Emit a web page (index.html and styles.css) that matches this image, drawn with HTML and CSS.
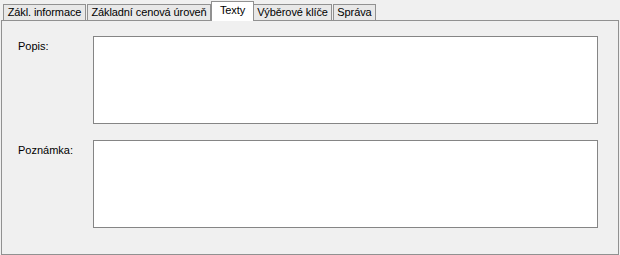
FILE: index.html
```html
<!DOCTYPE html>
<html>

<head>
    <title>Texty</title>
    <link rel="stylesheet" href="styles.css">
</head>

<body>
    <div class="tabs">
        <div class="tab tab-info">Zákl. informace</div>
        <div class="tab tab-price">Základní cenová úroveň</div>
        <div class="tab tab-texts active">Texty</div>
        <div class="tab tab-keys">Výběrové klíče</div>
        <div class="tab tab-admin">Správa</div>
    </div>
    <div class="panel">
        <div class="row">
            <label>Popis:</label>
            <textarea></textarea>
        </div>
        <div class="row">
            <label>Poznámka:</label>
            <textarea></textarea>
        </div>
    </div>
</body>

</html>
```

FILE: styles.css
```css
body {
    margin: 0;
    background-color: #f0f0f0;
    font-family: "Liberation Sans", Arial, sans-serif;
    font-size: 11px;
    color: #000;
}

.tabs {
    display: flex;
    align-items: flex-end;
    height: 20px;
    padding-left: 3px;
}

.tab {
    height: 15px;
    line-height: 15px;
    margin-right: 1px;
    border: 1px solid #919191;
    border-bottom: none;
    background-color: #e8e8e8;
    text-align: center;
    white-space: nowrap;
    letter-spacing: -0.1px;
    box-sizing: content-box;
}

.tab-info {
    width: 81px;
}

.tab-price {
    width: 122px;
}

.tab-texts {
    width: 41px;
}

.tab-keys {
    width: 77px;
}

.tab-admin {
    width: 41px;
}

.tab.active {
    position: relative;
    height: 19px;
    line-height: 16px;
    margin: 0 -1px -1px -1px;
    background-color: #fff;
    z-index: 1;
}

.panel {
    margin: 0 1px;
    border: 1px solid #919191;
    background-color: #f0f0f0;
    padding-top: 15px;
    box-sizing: border-box;
    height: 235px;
}

.row {
    display: flex;
    margin-bottom: 16px;
}

.row label {
    width: 75px;
    padding: 4px 0 0 16px;
}

.row textarea {
    width: 505px;
    height: 88px;
    margin: 0;
    padding: 0;
    border: 1px solid #858585;
    background-color: #fff;
    box-sizing: border-box;
    resize: none;
}
```
